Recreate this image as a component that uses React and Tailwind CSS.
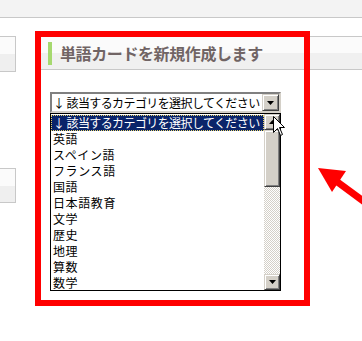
import React from 'react';

const categories = ['英語', 'スペイン語', 'フランス語', '国語', '日本語教育', '文学', '歴史', '地理', '算数', '数学'];

const PLACEHOLDER = '↓ 該当するカテゴリを選択してください';

// classic raised button, used for the combo button and scrollbar parts
const ClassicButton = ({ className = '', children }) => (
  <div
    className={`flex items-center justify-center bg-[#d4d0c8] border border-t-[#d4d0c8] border-l-[#d4d0c8] border-r-[#404040] border-b-[#404040] shadow-[inset_1px_1px_#ffffff,inset_-1px_-1px_#808080] ${className}`}
  >
    {children}
  </div>
);

const DownTriangle = () => (
  <svg width="7" height="4" viewBox="0 0 7 4">
    <path d="M0 0h7L3.5 4z" fill="#000" />
  </svg>
);

const App = () => {
  return (
    <div className="relative h-[341px] w-full overflow-hidden bg-white font-['Noto_Sans_CJK_JP','Noto_Sans',sans-serif]">
      {/* top strip */}
      <div className="h-[18px] bg-[#f3f3f3] border-b border-[#c8c8c8]" />

      <div className="flex pt-[18px]">
        {/* left column */}
        <div className="w-[16px] shrink-0 flex flex-col">
          <div className="h-[36px] border border-l-0 border-[#c8c8c8] bg-[linear-gradient(#fbfbfb_50%,#efefef_50%)]" />
          <div className="mt-[96px] h-[35px] border border-l-0 border-[#c8c8c8] bg-[linear-gradient(#fbfbfb_50%,#efefef_50%)]" />
        </div>

        {/* main column */}
        <div className="ml-[22px] flex-1">
          <div className="h-[34px] flex items-center pl-[10px] border-y border-[#c8c8c8] bg-[linear-gradient(#fbfbfb_50%,#f0f0f0_50%)]">
            <div className="w-[4px] h-[23px] bg-[#a6d96f]" />
            <h2 className="ml-[8px] text-[16px] leading-[20px] font-bold text-[#706464] tracking-[-0.4px]">
              単語カードを新規作成します
            </h2>
          </div>

          {/* combo box */}
          <div className="ml-[12px] mt-[22px] w-[231px] text-[12px] leading-[16px] text-black">
            <div className="h-[21px] flex items-center border-2 border-t-[#808080] border-l-[#808080] border-r-[#d4d0c8] border-b-[#d4d0c8] bg-white">
              <span className="flex-1 pl-[1px] whitespace-nowrap overflow-hidden tracking-[-0.6px]">{PLACEHOLDER}</span>
              <ClassicButton className="w-[17px] h-[17px] shrink-0">
                <DownTriangle />
              </ClassicButton>
            </div>

            {/* open list */}
            <div className="h-[178px] flex border border-black bg-white">
              <ul className="flex-1 min-w-0 pt-[1px]">
                <li className="h-[16px] px-[2px] bg-[#0a246a] text-white whitespace-nowrap overflow-hidden outline-1 outline-dotted outline-[#e8d46a] -outline-offset-1 tracking-[-0.6px]">
                  {PLACEHOLDER}
                </li>
                {categories.map((c) => (
                  <li key={c} className="h-[16px] px-[2px] whitespace-nowrap tracking-[0.6px]">
                    {c}
                  </li>
                ))}
              </ul>
              <div className="w-[16px] shrink-0 flex flex-col">
                <ClassicButton className="h-[16px]">
                  <svg width="7" height="4" viewBox="0 0 7 4">
                    <path d="M0 4h7L3.5 0z" fill="#000" />
                  </svg>
                </ClassicButton>
                <ClassicButton className="h-[57px]" />
                <div className="flex-1 bg-[repeating-conic-gradient(#d4d0c8_0_25%,#ffffff_0_50%)] bg-[length:2px_2px]" />
                <ClassicButton className="h-[16px]">
                  <DownTriangle />
                </ClassicButton>
              </div>
            </div>
          </div>
        </div>
      </div>

      {/* mouse pointer */}
      <svg className="absolute left-[273px] top-[116px]" width="13" height="20" viewBox="0 0 13 20">
        <path d="M0.5 0.5V16.5L4.5 12.5L7.5 19.5L9.5 18.5L6.5 11.5H11.5Z" fill="#fff" stroke="#000" strokeWidth="1" />
      </svg>

      {/* red highlight frame */}
      <div className="absolute left-[35px] top-[31px] w-[275px] h-[275px] border-[6px] border-[#ff0000]" />

      {/* red arrow */}
      <svg className="absolute left-[310px] top-[160px]" width="52" height="60" viewBox="0 0 52 60">
        <path d="M22 18L60 46" stroke="#ff0000" strokeWidth="7" />
        <path d="M8 8L36 11L22 32Z" fill="#ff0000" />
      </svg>
    </div>
  );
};

export default App;
